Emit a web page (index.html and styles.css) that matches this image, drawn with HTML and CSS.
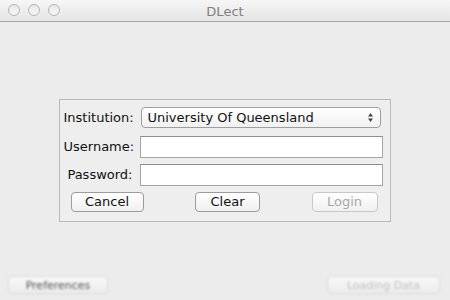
FILE: index.html
```html
<!DOCTYPE html>
<html>
<head>
    <meta charset="UTF-8">
    <title>DLect</title>
    <link rel="stylesheet" href="styles.css">
</head>
<body>
    <div class="window">
        <div class="titlebar">
            <div class="lights">
                <span class="light"></span>
                <span class="light"></span>
                <span class="light"></span>
            </div>
            <div class="title">DLect</div>
        </div>

        <div class="content">
            <form class="login-panel">
                <label class="field-label label-first">Institution:</label>
                <div class="select">
                    <span>University Of Queensland</span>
                    <svg class="arrows" width="7" height="11" viewBox="0 0 7 11">
                        <path d="M3.5 1 L6 4.5 L1 4.5 Z" fill="#444"/>
                        <path d="M3.5 10 L6 6.5 L1 6.5 Z" fill="#444"/>
                    </svg>
                </div>

                <label class="field-label">Username:</label>
                <input class="text-field" type="text">

                <label class="field-label">Password:</label>
                <input class="text-field" type="password">

                <div class="button-row">
                    <button type="button" class="btn btn-cancel">Cancel</button>
                    <button type="button" class="btn btn-clear">Clear</button>
                    <button type="button" class="btn btn-login" disabled>Login</button>
                </div>
            </form>
        </div>

        <!-- barra inferior (desfocada na captura) -->
        <div class="bottom-bar">
            <button type="button" class="btn-blur btn-prefs">Preferences</button>
            <button type="button" class="btn-blur btn-loading">Loading Data</button>
        </div>
    </div>
</body>
</html>
```

FILE: styles.css
```css
:root {
    --bg-color: #ececec;
    --text-color: #111;
    --disabled-color: #a8a8a8;
}

body {
    margin: 0;
    font-family: "DejaVu Sans", sans-serif;
    font-size: 13px;
    background-color: var(--bg-color);
    color: var(--text-color);
}

.window {
    width: 450px;
    height: 300px;
    display: flex;
    flex-direction: column;
    overflow: hidden;
}

.titlebar {
    height: 21px;
    border-bottom: 1px solid #a4a4a4;
    background: linear-gradient(#f6f6f6, #e4e4e4);
    position: relative;
    display: flex;
    align-items: center;
    justify-content: center;
}

.lights {
    position: absolute;
    left: 8px;
    top: 4px;
    display: flex;
    gap: 8px;
}

.light {
    width: 10px;
    height: 10px;
    border: 1px solid #b4b4b4;
    border-radius: 50%;
    background: linear-gradient(#e8e8e8, #f6f6f6);
}

.title {
    font-size: 13px;
    color: #808080;
    padding-top: 1px;
}

.content {
    flex: 1;
    display: flex;
    align-items: center;
    justify-content: center;
    padding-top: 36px;
}

.login-panel {
    box-sizing: border-box;
    width: 332px;
    margin-left: -1px;
    border: 1px solid #b9b9b9;
    background-color: #eeeeee;
    padding: 7px 7px 9px 4px;
    display: grid;
    grid-template-columns: 69px 1fr;
    column-gap: 7px;
    align-items: center;
}

.field-label {
    text-align: right;
    font-size: 13px;
    margin-bottom: 6px;
}

.label-first {
    margin-bottom: 8px;
}

.select {
    height: 19px;
    margin-left: 1px;
    margin-right: 2px;
    margin-bottom: 8px;
    border: 1px solid #9e9e9e;
    border-radius: 4px;
    background: linear-gradient(#ffffff, #f1f1f1);
    display: flex;
    align-items: center;
    justify-content: space-between;
    padding: 0 6px;
    font-size: 13px;
}

.text-field {
    box-sizing: border-box;
    height: 22px;
    margin: 0 0 6px 0;
    border: 1px solid #a4a4a4;
    border-top-color: #8e8e8e;
    background: #ffffff;
    padding: 0 3px;
}

.button-row {
    grid-column: 1 / 3;
    display: flex;
    justify-content: space-between;
    padding: 0 5px 0 7px;
}

.btn {
    height: 20px;
    border: 1px solid #9c9c9c;
    border-radius: 4px;
    background: linear-gradient(#ffffff, #f0f0f0);
    font-family: "DejaVu Sans", sans-serif;
    font-size: 13px;
    color: var(--text-color);
    padding: 0;
}

.btn-cancel {
    width: 73px;
}

.btn-clear {
    width: 65px;
}

.btn-login {
    width: 66px;
    border-color: #c8c8c8;
    color: var(--disabled-color);
}

.bottom-bar {
    height: 38px;
    box-sizing: border-box;
    display: flex;
    justify-content: space-between;
    align-items: flex-end;
    padding: 0 10px 6px 8px;
}

.btn-blur {
    height: 18px;
    border: 1px solid #dadada;
    border-radius: 4px;
    background: linear-gradient(#f8f8f8, #ececec);
    font-family: "DejaVu Sans", sans-serif;
    font-size: 11px;
    filter: blur(1px);
    padding: 0;
}

.btn-prefs {
    width: 100px;
    color: #555;
}

.btn-loading {
    width: 113px;
    color: #c0c0c0;
}
```
